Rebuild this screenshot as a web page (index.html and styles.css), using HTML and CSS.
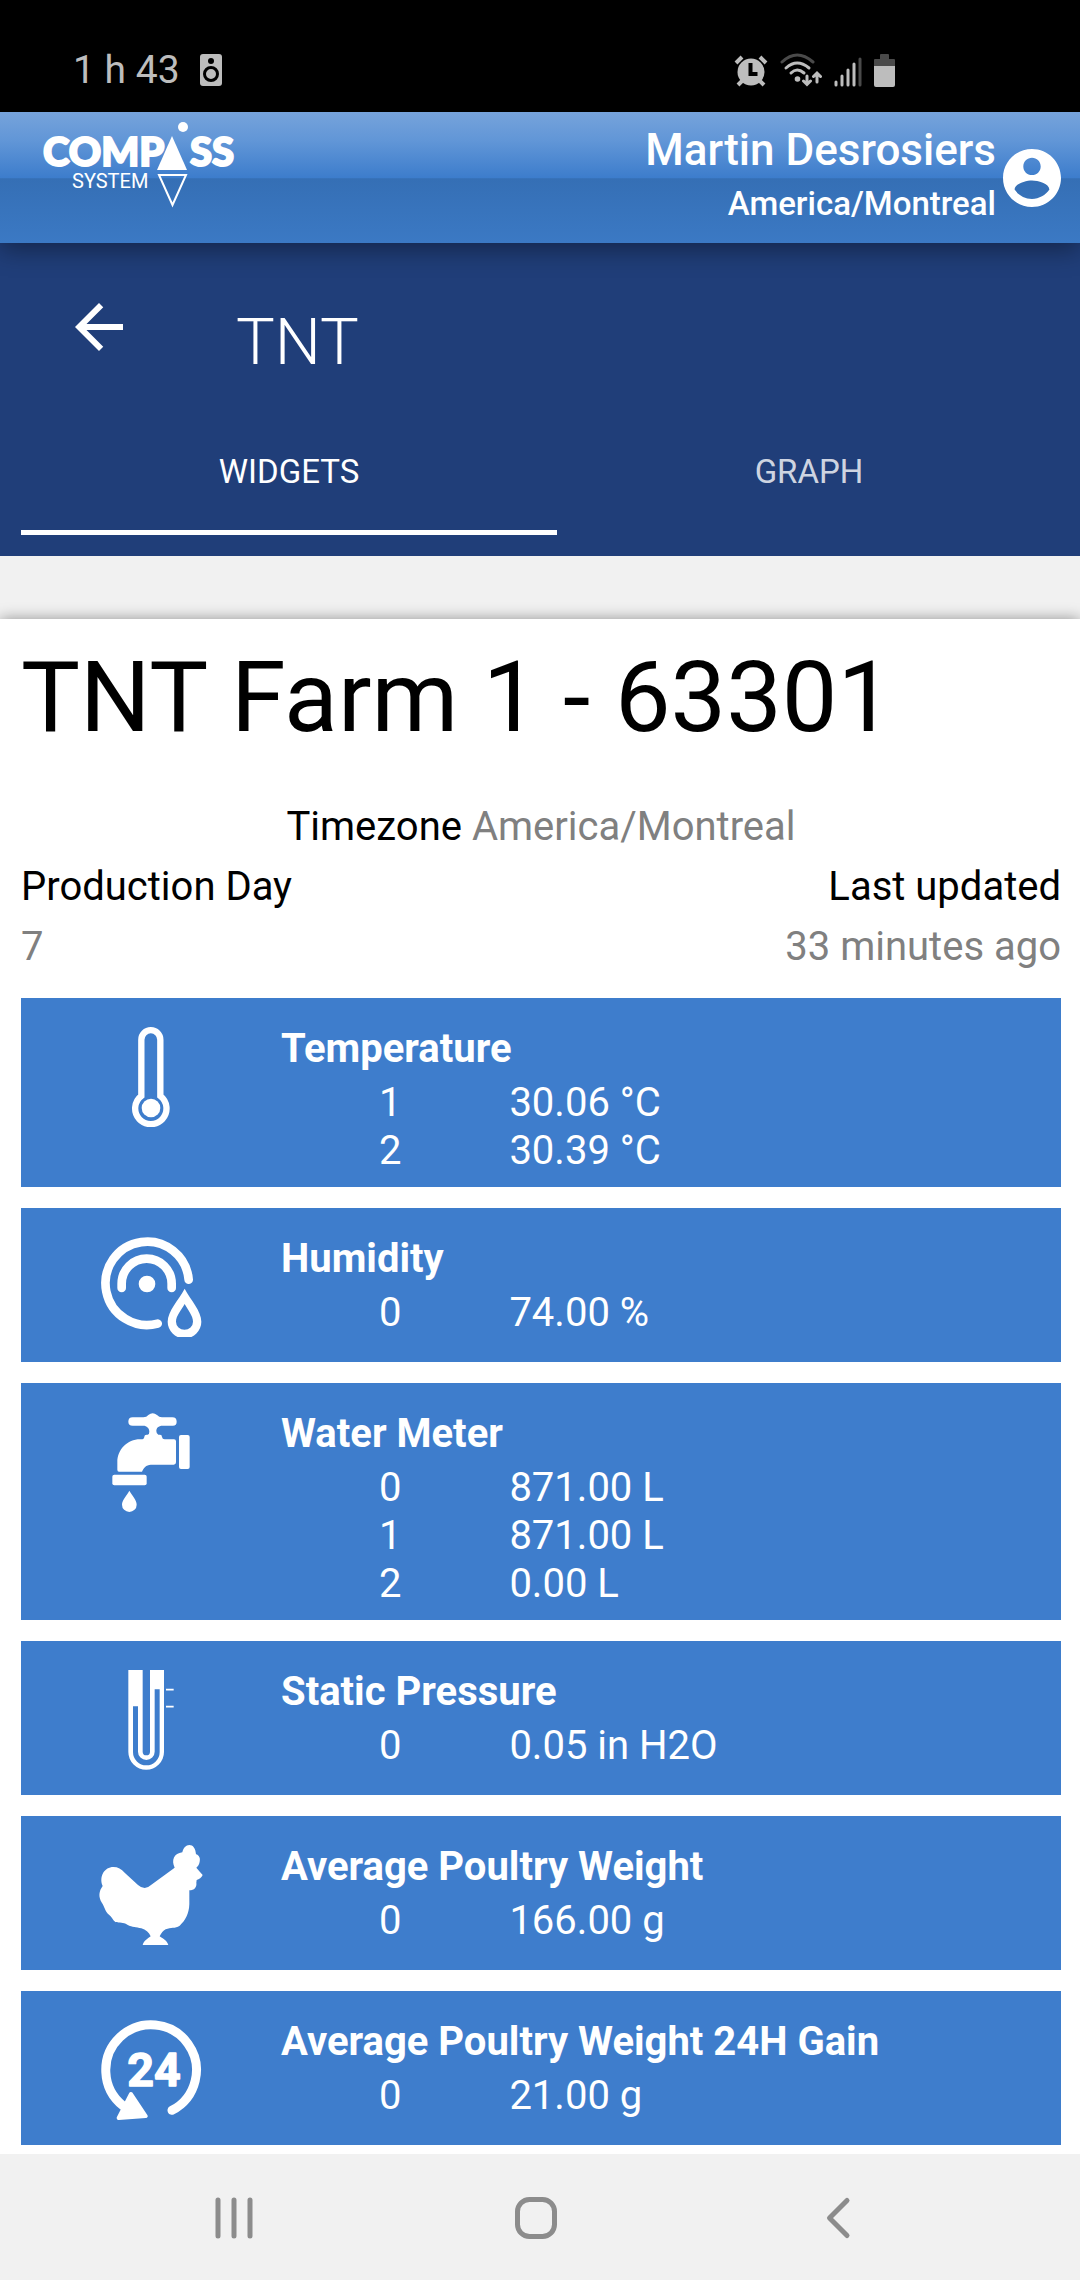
FILE: index.html
```html
<!DOCTYPE html>
<html lang="en">
<head>
<meta charset="utf-8">
<meta name="viewport" content="width=device-width, initial-scale=1">
<title>TNT Farm 1 - 63301</title>
<link rel="stylesheet" href="styles.css">
</head>
<body>
<div class="statusbar">
  <div class="statusbar-left">
    <span>1 h 43</span>
    <svg width="22" height="32" viewBox="0 0 22 32" aria-hidden="true">
      <rect width="22" height="32" rx="3" fill="#bdbdbd"/>
      <circle cx="11" cy="7" r="3" fill="#000"/>
      <circle cx="11" cy="20" r="6.500" fill="#bdbdbd" stroke="#000" stroke-width="3"/>
    </svg>
  </div>
  <div class="statusbar-right">
    <svg width="34" height="34" viewBox="0 0 34 34" aria-hidden="true">
      <g stroke="#bdbdbd" stroke-width="4" fill="none"><path d="M2 10l6-6M32 10l-6-6M4 32l5-5M30 32l-5-5"/></g>
      <circle cx="17" cy="19" r="13.500" fill="#bdbdbd"/>
      <path d="M16.500 10v11h7" fill="none" stroke="#000" stroke-width="4"/>
    </svg>
    <svg width="42" height="34" viewBox="0 0 42 34" aria-hidden="true">
      <g fill="none" stroke-width="3" stroke-linecap="round">
        <path d="M2 9Q17-5 33 9" stroke="#4a4a4a"/>
        <path d="M6 15Q17 5 29 15M11 20Q17 14 24 20" stroke="#bdbdbd"/>
        <path d="M27 23v8M23.500 28l3.500 3.500 3.500-3.500M37 29v-8M33.500 23.500l3.500-3.500 3.500 3.500" stroke="#bdbdbd"/>
      </g>
      <circle cx="17.500" cy="26" r="2.800" fill="#bdbdbd"/>
    </svg>
    <svg width="28" height="34" viewBox="0 0 28 34" aria-hidden="true">
      <g stroke-width="3" stroke-linecap="round" stroke="#bdbdbd"><path d="M2 29v3M8 23v9M14 17v15M20 11v21"/><path d="M26 6v26" stroke="#4a4a4a"/></g>
    </svg>
    <svg width="22" height="34" viewBox="0 0 22 34" aria-hidden="true">
      <path d="M6 6V2q0-1 1-1h7q1 0 1 1v4h5q1 0 1 1v6H0V7q0-1 1-1z" fill="#4a4a4a"/>
      <path d="M0 13h21v19q0 2-2 2H2q-2 0-2-2z" fill="#bdbdbd"/>
    </svg>
  </div>
</div>

<header class="topbar">
  <a class="logo" href="#" aria-label="Compass System">
    <svg width="200" height="90" viewBox="0 0 200 90">
      <g fill="#fff">
        <text class="logo-name" x="0" y="46">COMP</text>
        <text class="logo-name" x="147" y="46">SS</text>
        <text class="logo-sub" x="29" y="68">SYSTEM</text>
        <path d="M129 16l15 34h-30z"/>
        <circle cx="140" cy="7" r="5"/>
        <path d="M116 55h27l-13.500 30z" fill="none" stroke="#fff" stroke-width="2"/>
      </g>
    </svg>
  </a>
  <div class="account">
    <div class="account-text">
      <span class="account-name">Martin Desrosiers</span>
      <span class="account-zone">America/Montreal</span>
    </div>
    <button class="icon-button" aria-label="Account">
      <svg width="58" height="58" viewBox="2 2 20 20"><path fill="#fff" d="M12 2C6.480 2 2 6.480 2 12s4.480 10 10 10 10-4.480 10-10S17.520 2 12 2zm0 3c1.660 0 3 1.340 3 3s-1.340 3-3 3-3-1.340-3-3 1.340-3 3-3zm0 14.200c-2.500 0-4.710-1.280-6-3.220.03-1.990 4-3.080 6-3.080 1.990 0 5.970 1.090 6 3.080-1.290 1.940-3.500 3.220-6 3.220z"/></svg>
    </button>
  </div>
</header>

<nav class="section-nav">
  <div class="title-row">
    <button class="icon-button" aria-label="Back">
      <svg width="48" height="48" viewBox="4 4 16 16"><path fill="#fff" d="M20 11H7.830l5.590-5.590L12 4l-8 8 8 8 1.410-1.410L7.830 13H20v-2z"/></svg>
    </button>
    <h1 class="section-title">TNT</h1>
  </div>
  <div class="tabs" role="tablist">
    <button class="tab tab-active" role="tab" aria-selected="true">WIDGETS</button>
    <button class="tab" role="tab" aria-selected="false">GRAPH</button>
  </div>
</nav>

<main class="panel">
  <h2 class="farm-name">TNT Farm 1 - 63301</h2>
  <p class="timezone">Timezone <span class="muted">America/Montreal</span></p>
  <div class="meta">
    <div>Production Day<br><span class="muted">7</span></div>
    <div class="meta-end">Last updated<br><span class="muted">33 minutes ago</span></div>
  </div>

  <div class="widgets">
    <section class="widget">
      <div class="widget-icon">
        <svg width="106" height="100" viewBox="114 81 318 300" aria-hidden="true">
          <path d="M244 288V119a28.500 28.500 0 0 1 57 0V288A47 47 0 1 1 244 288z" fill="none" stroke="#fff" stroke-width="19"/>
          <circle cx="273" cy="324" r="28" fill="#fff"/>
        </svg>
      </div>
      <div class="widget-body">
        <h3 class="widget-title">Temperature</h3>
        <table class="readings">
          <tr><th scope="row">1</th><td>30.06 °C</td></tr>
          <tr><th scope="row">2</th><td>30.39 °C</td></tr>
        </table>
      </div>
    </section>

    <section class="widget">
      <div class="widget-icon">
        <svg width="106" height="100" viewBox="114 81 318 300" aria-hidden="true">
          <g fill="none" stroke="#fff" stroke-width="26" stroke-linecap="round">
            <path d="M386 209A125 125 0 1 0 293 341"/>
            <path d="M185 234V221a75 75 0 0 1 150 0v13"/>
          </g>
          <circle cx="261" cy="222" r="25" fill="#fff"/>
          <path fill="#fff" fill-rule="evenodd" d="M374 236C392 270 424 303 424 335a50 50 0 0 1-101 0C323 303 356 270 374 236zM374 282C364 300 348 318 348 335a25 24 0 0 0 51 0C399 318 384 300 374 282z"/>
        </svg>
      </div>
      <div class="widget-body">
        <h3 class="widget-title">Humidity</h3>
        <table class="readings">
          <tr><th scope="row">0</th><td>74.00 %</td></tr>
        </table>
      </div>
    </section>

    <section class="widget">
      <div class="widget-icon">
        <svg width="106" height="100" viewBox="114 66 318 300" aria-hidden="true">
          <g fill="#fff">
            <path d="M218 82h32q10 0 15-7 13-11 26 0 6 7 15 7h31q13 0 13 13t-13 12h-29c-13 0-19 7-19 16q0 9 6 11h5q6 0 6 7 1 7 8 7h28q6 0 6 6v63q0 7-7 7h-63c-16 0-24 3-32 21h-69q-5 0-5-6v-23c0-37 30-68 68-68h4q8 0 9-8 0-6 7-6h3q5-1 5-9c0-11-8-18-18-18h-32q-13 0-13-12 0-13 13-13z"/>
            <rect x="357" y="135" width="32" height="102" rx="6"/>
            <rect x="157" y="254" width="103" height="32" rx="6"/>
            <path d="M208 302c8 15 22 27 22 42a22 22 0 0 1-44 0c0-15 15-27 22-42z"/>
          </g>
        </svg>
      </div>
      <div class="widget-body">
        <h3 class="widget-title">Water Meter</h3>
        <table class="readings">
          <tr><th scope="row">0</th><td>871.00 L</td></tr>
          <tr><th scope="row">1</th><td>871.00 L</td></tr>
          <tr><th scope="row">2</th><td>0.00 L</td></tr>
        </table>
      </div>
    </section>

    <section class="widget">
      <div class="widget-icon">
        <svg width="106" height="100" viewBox="114 93 318 300" aria-hidden="true">
          <path fill="#fff" fill-rule="evenodd" d="M205 93h43v245a11 11 0 0 0 22 0V93h42v246a53 53 0 0 1-107 0zM219 202v137a39 39 0 0 0 80 0V151h-15v187a25 25 0 0 1-50 0V202z"/>
          <path d="M318 152h23M318 203h23" stroke="#fff" stroke-width="5"/>
        </svg>
      </div>
      <div class="widget-body">
        <h3 class="widget-title">Static Pressure</h3>
        <table class="readings">
          <tr><th scope="row">0</th><td>0.05 in H2O</td></tr>
        </table>
      </div>
    </section>

    <section class="widget">
      <div class="widget-icon">
        <svg width="106" height="100" viewBox="114 108 318 300" aria-hidden="true">
          <path fill="#fff" d="M367 130c3-13 11-22 21-22 11 0 19 10 20 28 9 2 14 12 11 22-1 8-5 13-10 18l9 11 10 11c-3 8-11 13-18 15l-1 8c2 13-6 23-21 23v42c-1 28-12 49-29 64-14 10-26 3-42 11-8 4-13 11-18 21 7 5 22 12 26 26h-77c3-13 17-20 24-26-5-12-15-20-28-24-16-5-26-2-42-11-13-8-22-4-36-8-9-7-10-16-19-22-12-9-14-26-21-35-12-19-9-36 2-51-12-29 6-57 32-57 14 0 24 6 34 17l40 37q20 18 38 1l72-53c-11-22-2-43 23-46z"/>
        </svg>
      </div>
      <div class="widget-body">
        <h3 class="widget-title">Average Poultry Weight</h3>
        <table class="readings">
          <tr><th scope="row">0</th><td>166.00 g</td></tr>
        </table>
      </div>
    </section>

    <section class="widget">
      <div class="widget-icon">
        <svg width="106" height="100" viewBox="112 120 318 300" aria-label="24 hours">
          <path d="M334 391A136 136 0 1 0 187 377" fill="none" stroke="#fff" stroke-width="27" stroke-linecap="round"/>
          <path d="M211 342l44 66-81 6z" fill="#fff" stroke="#fff" stroke-width="12" stroke-linejoin="round"/>
          <text class="hours" x="280" y="318">24</text>
        </svg>
      </div>
      <div class="widget-body">
        <h3 class="widget-title">Average Poultry Weight 24H Gain</h3>
        <table class="readings">
          <tr><th scope="row">0</th><td>21.00 g</td></tr>
        </table>
      </div>
    </section>
  </div>
</main>

<footer class="system-nav">
  <button class="icon-button" aria-label="Recent apps">
    <svg width="44" height="44" viewBox="0 0 44 44"><path d="M6 4v36M22 4v36M38 4v36" stroke="#8c8c8c" stroke-width="5" stroke-linecap="round"/></svg>
  </button>
  <button class="icon-button" aria-label="Home">
    <svg width="44" height="44" viewBox="0 0 44 44"><rect x="3.500" y="3.500" width="37" height="37" rx="12" fill="none" stroke="#8c8c8c" stroke-width="5"/></svg>
  </button>
  <button class="icon-button" aria-label="Back">
    <svg width="44" height="44" viewBox="0 0 44 44"><path d="M31 4.500L13.500 22 31 39.500" fill="none" stroke="#8c8c8c" stroke-width="5" stroke-linecap="round" stroke-linejoin="round"/></svg>
  </button>
</footer>
</body>
</html>
```

FILE: styles.css
```css
* {
  box-sizing: border-box;
}

body {
  margin: 0;
  min-height: 100vh;
  display: flex;
  flex-direction: column;
  background: #f1f1f1;
  color: #000;
  font-family: Roboto, "Noto Sans", sans-serif;
  font-size: 40px;
  line-height: 60px;
}

h1, h2, h3, p {
  margin: 0;
}

svg {
  display: block;
}

button {
  border: 0;
  background: none;
  font: inherit;
  color: inherit;
}

.icon-button {
  padding: 0;
}

/* Phone status bar */
.statusbar {
  height: 112px;
  padding: 28px 184px 0 73px;
  display: flex;
  justify-content: space-between;
  background: #000;
  color: #bdbdbd;
  font-size: 39px;
  line-height: 84px;
}

.statusbar-left,
.statusbar-right {
  display: flex;
  align-items: center;
  height: 84px;
}

.statusbar-left {
  gap: 20px;
}

.statusbar-right {
  gap: 12px;
}

/* Application header */
.topbar {
  position: relative;
  height: 131px;
  padding: 0 19px 0 43px;
  display: flex;
  justify-content: space-between;
  background: linear-gradient(#76a3db 0%, #6196d7 22%, #3d7dcc 50%, #356fb5 51%, #3b79c4 100%);
  box-shadow: 0 6px 24px rgba(0, 0, 0, 0.4);
  color: #fff;
}

.logo {
  padding-top: 8px;
}

.logo-name {
  font: 900 40px Lato, sans-serif;
  stroke: #fff;
  stroke-width: 2px;
}

.logo-sub {
  font: 400 20px Roboto, sans-serif;
}

.account {
  display: flex;
  align-items: center;
  gap: 7px;
  font-weight: 500;
  text-align: right;
}

.account-text {
  display: flex;
  flex-direction: column;
  padding-bottom: 8px;
}

.account-name {
  font-size: 44px;
  line-height: 60px;
}

.account-zone {
  font-size: 33px;
  line-height: 48px;
}

/* Section title and tabs */
.section-nav {
  padding: 60px 19px 21px 21px;
  background: #203e79;
  color: #fff;
}

.title-row {
  display: flex;
  align-items: flex-start;
  gap: 113px;
  padding-left: 54px;
}

.section-title {
  padding-top: 9px;
  font-size: 65px;
  font-weight: 300;
  line-height: 60px;
}

.tabs {
  display: grid;
  grid-template-columns: 536fr 504fr;
  padding-top: 38px;
}

.tab {
  height: 125px;
  padding: 4px 0 0;
  border-bottom: 5px solid transparent;
  color: rgba(255, 255, 255, 0.8);
  font-size: 33px;
}

.tab-active {
  border-color: #fff;
  color: #fff;
}

/* Farm details */
.panel {
  flex: 1;
  margin-top: 63px;
  padding: 21px 19px 9px 21px;
  background: #fff;
  box-shadow: 0 0 14px rgba(0, 0, 0, 0.4);
}

.farm-name {
  font-size: 99px;
  font-weight: 400;
  line-height: 114px;
}

.timezone {
  padding-top: 43px;
  text-align: center;
}

.meta {
  display: flex;
  justify-content: space-between;
}

.meta-end {
  text-align: right;
}

.muted {
  color: #808080;
}

/* Sensor cards */
.widgets {
  display: grid;
  gap: 21px;
  padding-top: 21px;
}

.widget {
  display: grid;
  grid-template-columns: 1fr 3fr;
  background: #3e7dcc;
  color: #fff;
  line-height: 48px;
}

.widget-icon {
  display: flex;
  justify-content: center;
  padding: 29px 0 25px;
}

.widget-body {
  padding: 27px 0 12px;
}

.widget-title {
  margin-bottom: 6px;
  font-size: 40px;
  font-weight: 700;
}

.readings {
  width: 100%;
  border-collapse: collapse;
}

.readings th {
  width: 28%;
  padding: 0;
  font-weight: 400;
}

.readings td {
  padding: 0 0 0 10px;
}

.hours {
  fill: #fff;
  stroke: #fff;
  stroke-width: 4px;
  stroke-linejoin: round;
  font: 700 140px Roboto, sans-serif;
  text-anchor: middle;
}

/* Phone navigation */
.system-nav {
  position: relative;
  height: 126px;
  display: flex;
  justify-content: center;
  align-items: center;
  gap: 258px;
  padding: 2px 8px 0 0;
  background: #f1f1f1;
}
```
